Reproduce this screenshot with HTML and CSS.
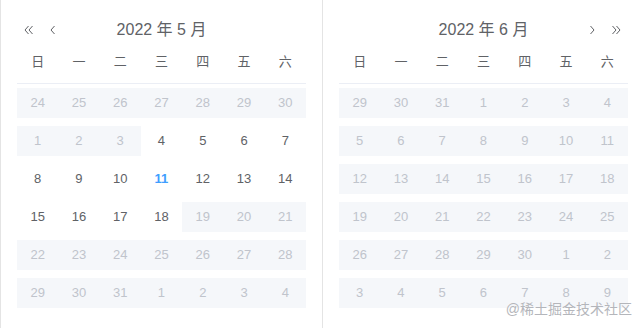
FILE: index.html
```
<!DOCTYPE html>
<html lang="zh-CN">
<head>
    <meta charset="UTF-8">
    <meta name="viewport" content="width=device-width, initial-scale=1.0">
    <title>Date Range Picker</title>
    <link rel="stylesheet" href="styles.css">
</head>
<body>
    <div class="picker">
        <div class="panel panel-left">
            <div class="header">
                <div class="nav">
                    <button class="arrow" title="前一年">
                        <svg width="10" height="10" viewBox="0 0 10 10"><path d="M4.5 1L1 5l3.5 4M8.5 1L5 5l3.5 4"/></svg>
                    </button>
                    <button class="arrow" title="上个月">
                        <svg width="10" height="10" viewBox="0 0 10 10"><path d="M6.5 1L3 5l3.5 4"/></svg>
                    </button>
                </div>
                <div class="title">2022 年 5 月</div>
                <div class="nav nav-right"></div>
            </div>
            <table class="days">
                <thead>
                    <tr><th>日</th><th>一</th><th>二</th><th>三</th><th>四</th><th>五</th><th>六</th></tr>
                </thead>
                <tbody>
                    <tr>
                        <td class="off"><div>24</div></td>
                        <td class="off"><div>25</div></td>
                        <td class="off"><div>26</div></td>
                        <td class="off"><div>27</div></td>
                        <td class="off"><div>28</div></td>
                        <td class="off"><div>29</div></td>
                        <td class="off"><div>30</div></td>
                    </tr>
                    <tr>
                        <td class="off"><div>1</div></td>
                        <td class="off"><div>2</div></td>
                        <td class="off"><div>3</div></td>
                        <td><div>4</div></td>
                        <td><div>5</div></td>
                        <td><div>6</div></td>
                        <td><div>7</div></td>
                    </tr>
                    <tr>
                        <td><div>8</div></td>
                        <td><div>9</div></td>
                        <td><div>10</div></td>
                        <td class="today"><div>11</div></td>
                        <td><div>12</div></td>
                        <td><div>13</div></td>
                        <td><div>14</div></td>
                    </tr>
                    <tr>
                        <td><div>15</div></td>
                        <td><div>16</div></td>
                        <td><div>17</div></td>
                        <td><div>18</div></td>
                        <td class="off"><div>19</div></td>
                        <td class="off"><div>20</div></td>
                        <td class="off"><div>21</div></td>
                    </tr>
                    <tr>
                        <td class="off"><div>22</div></td>
                        <td class="off"><div>23</div></td>
                        <td class="off"><div>24</div></td>
                        <td class="off"><div>25</div></td>
                        <td class="off"><div>26</div></td>
                        <td class="off"><div>27</div></td>
                        <td class="off"><div>28</div></td>
                    </tr>
                    <tr>
                        <td class="off"><div>29</div></td>
                        <td class="off"><div>30</div></td>
                        <td class="off"><div>31</div></td>
                        <td class="off"><div>1</div></td>
                        <td class="off"><div>2</div></td>
                        <td class="off"><div>3</div></td>
                        <td class="off"><div>4</div></td>
                    </tr>
                </tbody>
            </table>
        </div>

        <div class="panel panel-right">
            <div class="header">
                <div class="nav"></div>
                <div class="title">2022 年 6 月</div>
                <div class="nav nav-right">
                    <button class="arrow" title="下个月">
                        <svg width="10" height="10" viewBox="0 0 10 10"><path d="M3.5 1L7 5 3.5 9"/></svg>
                    </button>
                    <button class="arrow" title="后一年">
                        <svg width="10" height="10" viewBox="0 0 10 10"><path d="M1.5 1L5 5 1.5 9M5.5 1L9 5 5.5 9"/></svg>
                    </button>
                </div>
            </div>
            <table class="days">
                <thead>
                    <tr><th>日</th><th>一</th><th>二</th><th>三</th><th>四</th><th>五</th><th>六</th></tr>
                </thead>
                <tbody>
                    <tr>
                        <td class="off"><div>29</div></td>
                        <td class="off"><div>30</div></td>
                        <td class="off"><div>31</div></td>
                        <td class="off"><div>1</div></td>
                        <td class="off"><div>2</div></td>
                        <td class="off"><div>3</div></td>
                        <td class="off"><div>4</div></td>
                    </tr>
                    <tr>
                        <td class="off"><div>5</div></td>
                        <td class="off"><div>6</div></td>
                        <td class="off"><div>7</div></td>
                        <td class="off"><div>8</div></td>
                        <td class="off"><div>9</div></td>
                        <td class="off"><div>10</div></td>
                        <td class="off"><div>11</div></td>
                    </tr>
                    <tr>
                        <td class="off"><div>12</div></td>
                        <td class="off"><div>13</div></td>
                        <td class="off"><div>14</div></td>
                        <td class="off"><div>15</div></td>
                        <td class="off"><div>16</div></td>
                        <td class="off"><div>17</div></td>
                        <td class="off"><div>18</div></td>
                    </tr>
                    <tr>
                        <td class="off"><div>19</div></td>
                        <td class="off"><div>20</div></td>
                        <td class="off"><div>21</div></td>
                        <td class="off"><div>22</div></td>
                        <td class="off"><div>23</div></td>
                        <td class="off"><div>24</div></td>
                        <td class="off"><div>25</div></td>
                    </tr>
                    <tr>
                        <td class="off"><div>26</div></td>
                        <td class="off"><div>27</div></td>
                        <td class="off"><div>28</div></td>
                        <td class="off"><div>29</div></td>
                        <td class="off"><div>30</div></td>
                        <td class="off"><div>1</div></td>
                        <td class="off"><div>2</div></td>
                    </tr>
                    <tr>
                        <td class="off"><div>3</div></td>
                        <td class="off"><div>4</div></td>
                        <td class="off"><div>5</div></td>
                        <td class="off"><div>6</div></td>
                        <td class="off"><div>7</div></td>
                        <td class="off"><div>8</div></td>
                        <td class="off"><div>9</div></td>
                    </tr>
                </tbody>
            </table>
        </div>

        <div class="watermark">@稀土掘金技术社区</div>
    </div>
</body>
</html>
```

FILE: styles.css
```
body {
    margin: 0;
    background-color: #fff;
    font-family: "Liberation Sans", Arial, "Noto Sans CJK SC", sans-serif;
    color: #606266;
}

.picker {
    position: relative;
    display: flex;
    width: 643px;
    height: 328px;
    border-left: 1px solid #e4e4e4;
}

.panel {
    width: 289px;
    padding: 12px 16px 0;
}

.panel-right {
    border-left: 1px solid #e4e4e4;
}

.header {
    display: grid;
    grid-template-columns: 1fr auto 1fr;
    align-items: center;
    height: 36px;
}

.nav {
    display: flex;
    align-items: center;
    gap: 14px;
    padding: 0 7px;
}

.nav-right {
    justify-content: flex-end;
}

.arrow {
    display: flex;
    padding: 0;
    border: none;
    background: none;
    cursor: pointer;
}

.arrow svg {
    fill: none;
    stroke: #606266;
    stroke-width: 1;
}

.title {
    font-size: 16px;
    line-height: 20px;
    color: #606266;
}

.days {
    width: 100%;
    table-layout: fixed;
    border-collapse: collapse;
    border-spacing: 0;
    font-size: 13px;
}

.days th {
    padding: 4px 0 11px;
    font-weight: normal;
    line-height: 20px;
    color: #606266;
    border-bottom: 1px solid #ebeef5;
}

.days td {
    padding: 4px 0;
    text-align: center;
}

.days td div {
    height: 30px;
    line-height: 30px;
}

.days td.off div {
    background-color: #f5f7fa;
    color: #c0c4cc;
}

.days td.today div {
    color: #409eff;
    font-weight: bold;
}

.watermark {
    position: absolute;
    right: 12px;
    bottom: 9px;
    font-size: 14px;
    line-height: 20px;
    color: #b4b6bb;
    text-shadow: 0 0 1px #fff;
}
```
